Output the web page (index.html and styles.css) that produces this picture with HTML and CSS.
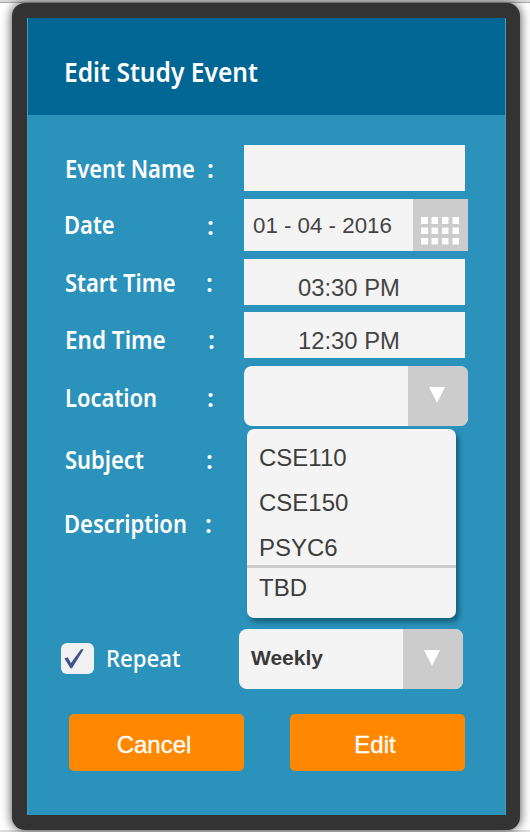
FILE: index.html
```html
<!DOCTYPE html>
<html lang="en">
<head>
<meta charset="utf-8">
<title>Edit Study Event</title>
<link rel="stylesheet" href="styles.css">
</head>
<body>
<main class="device">
  <div class="screen">
    <header class="header"><h1 class="title">Edit Study Event</h1></header>
    <form class="form">
      <div class="row row-name"><label class="label">Event Name</label><span class="colon">:</span><div class="field"></div></div>
      <div class="row row-date"><label class="label">Date</label><span class="colon">:</span>
        <div class="field date"><span class="date-text">01 - 04 - 2016</span>
          <span class="addon calendar"><svg class="dots" viewBox="0 0 38 28" fill="#fff"><path d="M0 0h7v7H0zM10.500 0h6.500v7h-6.500zM21 0h6.500v7H21zM31.500 0h6.500v7h-6.500zM0 10.500h7v6.500H0zM10.500 10.500h6.500v6.500h-6.500zM21 10.500h6.500v6.500H21zM31.500 10.500h6.500v6.500h-6.500zM0 21h7v6.500H0zM10.500 21h6.500v6.500h-6.500zM21 21h6.500v6.500H21zM31.500 21h6.500v6.500h-6.500z"/></svg></span></div></div>
      <div class="row row-start"><label class="label">Start Time</label><span class="colon">:</span><div class="field time">03:30 PM</div></div>
      <div class="row row-end"><label class="label">End Time</label><span class="colon">:</span><div class="field time">12:30 PM</div></div>
      <div class="row row-location"><label class="label">Location</label><span class="colon">:</span>
        <div class="field select"><span class="value"></span><span class="addon arrow"><svg class="tri" viewBox="0 0 16 16"><path d="M0 0h16L8 16z" fill="#fff"/></svg></span>
          <ul class="menu"><li>CSE110</li><li>CSE150</li><li>PSYC6</li><li class="last">TBD</li></ul>
        </div></div>
      <div class="row row-subject"><label class="label">Subject</label><span class="colon">:</span></div>
      <div class="row row-desc"><label class="label">Description</label><span class="colon">:</span></div>
      <div class="repeat">
        <span class="check"><svg viewBox="0 0 33 31" width="33" height="31"><path d="M3.500 15.500l3.200-1.300 3.300 5.800L20 6.300h2.700L11 25.200H9.400z" fill="#42528c"/></svg></span>
        <label class="repeat-label">Repeat</label>
        <div class="select weekly"><span class="value">Weekly</span><span class="addon arrow"><svg class="tri" viewBox="0 0 16 16"><path d="M0 0h16L8 16z" fill="#fff"/></svg></span></div>
      </div>
      <div class="actions"><button type="button" class="btn">Cancel</button><button type="button" class="btn">Edit</button></div>
    </form>
  </div>
</main>
</body>
</html>
```
FILE: styles.css
```css
* { box-sizing: border-box; }
body {
  margin: 0;
  height: 832px;
  padding: 3px 10px 2px 12px;
  overflow: hidden;
  background: linear-gradient(#dcdcdc 0 2px, #aaa 2px 3px, #fff 3px 830px, #ddd 830px);
  font-family: "Liberation Sans", Arial, sans-serif;
}
.device {
  width: 508px;
  height: 827px;
  padding: 15px 14px 14px 15px;
  border-radius: 13px;
  background: #333;
  box-shadow: 0 0 11px rgba(0, 0, 0, 0.75);
}
.screen {
  height: 797px;
  background: #2b92bb;
  border: solid #4b9aad;
  border-width: 0 1px;
}
.header {
  height: 97px;
  padding: 36px 0 0 36px;
  background: #006693;
}
.title, .label, .colon, .repeat-label {
  font-family: "Noto Sans", "Open Sans", sans-serif;
  font-weight: 600;
  color: #fff;
  white-space: nowrap;
}
.title {
  margin: 0;
  font-size: 27.5px;
  line-height: 36px;
  transform: scaleX(0.893);
  transform-origin: left;
}
.form { padding: 30px 36px 0 37px; }
.row {
  display: grid;
  grid-template-columns: 142px 37px 225px;
  align-items: center;
  height: 46px;
  margin-bottom: 8px;
}
.label {
  font-size: 25px;
  line-height: 30px;
  transform: scaleX(0.878);
  transform-origin: left;
}
.colon { font-size: 25px; line-height: 30px; }
.field { width: 221px; height: 46px; background: #f4f4f4; }
.row-date { height: 52px; }
.row-date .label { margin: -2px 0 0 -1px; }
.row-start { margin-bottom: 7px; }
.row-start .colon, .row-subject .colon { margin-left: -1px; }
.row-end .label, .row-end .colon { padding-top: 8px; }
.row-end .colon { margin-left: 1px; }
.row-end .label { transform: scaleX(0.9); }
.row-location, .row-subject, .row-desc { height: 60px; margin-bottom: 4px; }
.row-location .label, .row-location .colon { padding-top: 2px; }
.row-subject .label, .row-subject .colon,
.row-desc .label, .row-desc .colon { padding-bottom: 2px; }
.row-desc { margin-bottom: 75px; }
.row-desc .label { margin-left: -1px; }
.row-desc .colon { margin-left: -2px; }
.date, .select { display: flex; width: 224px; }
.date { height: 52px; }
.date-text { flex: 1; padding-left: 9px; font-size: 22.3px; line-height: 53px; color: #444; white-space: nowrap; }
.addon { background: #ccc; }
.calendar { width: 55px; padding: 18px 0 0 8px; }
.dots { display: block; width: 38px; height: 28px; }
.time { padding: 11px 0 0 54px; font-size: 23.8px; line-height: 35px; color: #444; white-space: nowrap; }
.select { position: relative; height: 60px; border-radius: 8px; background: #f4f4f4; }
.value { flex: 1; }
.arrow { width: 60px; padding: 21px 0 0 21px; border-radius: 0 8px 8px 0; }
.tri { display: block; width: 16px; height: 16px; }
.menu {
  position: absolute;
  z-index: 1;
  top: 63px;
  left: 3px;
  width: 209px;
  height: 189px;
  margin: 0;
  padding: 6px 0 0;
  list-style: none;
  border-radius: 7px;
  background: #f4f4f4;
  box-shadow: 3px 4px 5px rgba(0, 45, 65, 0.5);
  font-size: 24px;
  line-height: 45px;
  color: #3d3d3d;
}
.menu li { height: 45px; padding-left: 12px; }
.menu .last { margin-top: -5px; border-top: 3px solid #ccc; line-height: 40px; }
.repeat { display: flex; height: 60px; align-items: center; margin-left: -4px; }
.check { width: 33px; height: 31px; margin-top: -2px; border-radius: 6px; background: #f1f1f3; }
.check svg { display: block; }
.repeat-label {
  width: 133px;
  margin: -2px 0 0 12px;
  font-size: 24px;
  font-weight: 500;
  line-height: 30px;
  transform: scaleX(0.925);
  transform-origin: left;
}
.weekly .value { padding-left: 12px; font-size: 21px; font-weight: bold; line-height: 57px; color: #3a3a3a; }
.actions { display: flex; gap: 46px; margin: 25px 0 0 4px; }
.btn {
  width: 175px;
  height: 57px;
  padding: 4px 5px 0 0;
  border: 0;
  border-radius: 5px;
  background: #ff8800;
  color: #fff;
  font: 24px "Liberation Sans", Arial, sans-serif;
  -webkit-text-stroke: 0.3px #fff;
}
```
